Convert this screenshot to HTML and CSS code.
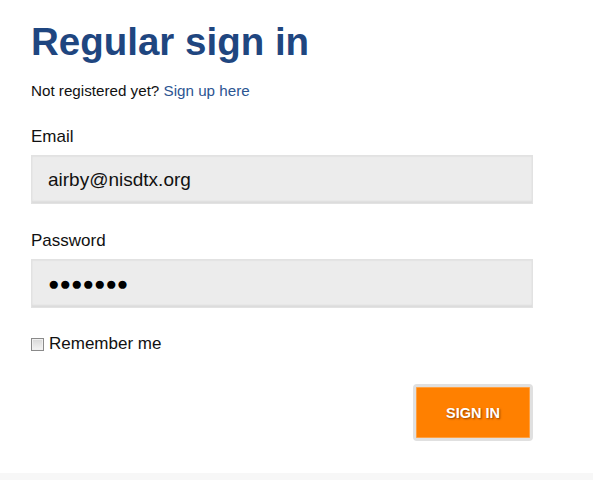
FILE: index.html
```html
<!DOCTYPE html>
<html>
<head>
<meta charset="utf-8">
<link rel="stylesheet" href="styles.css">
</head>
<body>
<div class="page">
  <form class="signin">
    <h1 class="title">Regular sign in</h1>
    <p class="note">Not registered yet? <a class="link" href="#">Sign up here</a></p>
    <label class="label">Email</label>
    <div class="field">airby@nisdtx.org</div>
    <label class="label">Password</label>
    <div class="field field-pw">&#9679;&#9679;&#9679;&#9679;&#9679;&#9679;&#9679;</div>
    <div class="remember"><span class="check"></span><span>Remember me</span></div>
    <div class="actions"><button class="btn" type="button">SIGN IN</button></div>
  </form>
  <div class="footer"></div>
</div>
</body>
</html>
```
FILE: styles.css
```css
html, body { margin: 0; padding: 0; background: #fff; }
body { font-family: "Liberation Sans", Arial, sans-serif; color: #111; }
.page { width: 593px; height: 480px; display: flex; flex-direction: column; }
.signin { padding: 22px 0 0 31px; width: 502px; display: flex; flex-direction: column; flex: 1; }
.title { margin: 0; font-size: 38.5px; line-height: 40px; font-weight: bold; color: #1f4680; }
.note { margin: 20px 0 0; font-size: 15.2px; line-height: 18px; color: #111; }
.link { color: #2c5592; text-decoration: none; }
.label { display: block; margin-top: 27px; font-size: 17px; line-height: 20px; color: #111; }
.field { margin-top: 8px; height: 49px; box-sizing: border-box; background: #ececec; border: 1px solid #e2e2e2; box-shadow: inset 0 -2px 2px #dcdcdc, inset 0 1px 1px #e4e4e4; padding: 0 16px; font-size: 19px; line-height: 47px; color: #111; }
.field-pw { font-size: 19px; letter-spacing: 0; color: #000; }
.remember { margin-top: 26px; display: flex; align-items: center; gap: 5px; font-size: 17px; line-height: 20px; color: #111; }
.check { width: 11px; height: 11px; border: 1px solid #8a8a8a; background: linear-gradient(#d8d8d8, #f4f4f4); box-shadow: inset 0 0 0 1px #f0f0f0; }
.actions { display: flex; justify-content: flex-end; margin-top: 30px; }
.btn { width: 120px; height: 57px; box-sizing: border-box; border: 3px solid #e0e0e0; border-radius: 4px; background: #ff8000; box-shadow: inset 0 0 0 1px #ffa040; color: #fff; font-family: "Liberation Sans", Arial, sans-serif; font-weight: bold; font-size: 14.5px; text-shadow: 1px 1px 2px rgba(120,50,0,0.8); padding: 0; cursor: pointer; }
.footer { height: 7px; background: #f7f7f7; }
```
